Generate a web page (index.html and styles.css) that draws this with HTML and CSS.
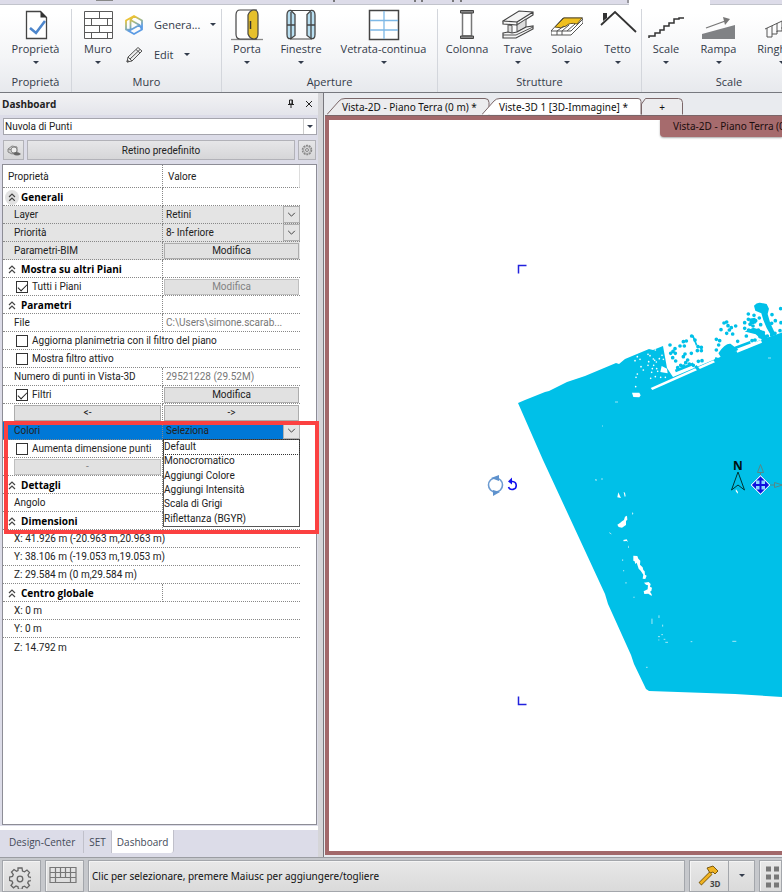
FILE: index.html
```
<!DOCTYPE html>
<html lang="it">
<head>
<meta charset="utf-8">
<title>Vista-3D</title>
<link rel="stylesheet" href="styles.css">
</head>
<body>
<svg width="0" height="0" class="defs" aria-hidden="true">
  <linearGradient id="hex" x1="0" y1="0" x2=".4" y2="1"><stop offset=".2" stop-color="#ecc233"/><stop offset=".5" stop-color="#9db68c"/><stop offset=".8" stop-color="#5b9be4"/></linearGradient>
  <symbol id="caret" viewBox="0 0 6 4"><path d="M0 0h6L3 3z" fill="#333c4c"/></symbol>
  <symbol id="chev" viewBox="0 0 10 6"><path d="M1 1l4 4 4-4" fill="none" stroke="#444" stroke-width="1.200"/></symbol>
  <symbol id="fold" viewBox="0 0 8 9"><path d="M1 4l3-3 3 3M1 8l3-3 3 3" fill="none" stroke="#444" stroke-width="1.200"/></symbol>
</svg>
<div class="app">
  <div class="menu-strip">
    <svg width="100%" height="5" aria-hidden="true"><path d="M96 0h17" stroke="#888" stroke-width="2"/><path d="M334 0v2M415 0v2M422 0v2M453 0v2M461 0v2" stroke="#555" stroke-width="1.500"/><path d="M629 0h81v5h-81z" fill="#fff"/><path d="M628 0v3" stroke="#555"/></svg>
  </div>
  <header class="ribbon">
    <section class="group group-props">
      <div class="tools tools-props">
        <button class="tool"><svg viewBox="0 0 32 32"><path d="M6.500 2.500h14l6 6v21h-20z" fill="#fff" stroke="#444" stroke-width="1.300"/><path d="M20.500 2v6.500h6.500z" fill="#333"/><path d="M10 19l6 5 9-12" fill="none" stroke="#4d86cc" stroke-width="2.600"/></svg>Proprietà<svg class="caret"><use href="#caret"/></svg></button>
      </div>
      <h2>Proprietà</h2>
    </section>
    <section class="group group-wall">
      <div class="tools tools-wall">
        <button class="tool"><svg viewBox="0 0 32 32"><path d="M2.500 2.500h28v27h-28zM2.500 9.500h28M2.500 16.500h28M2.500 23.500h28M17.500 2.500v7M9.500 9.500v7M25.500 9.500v7M17.500 16.500v7M9.500 23.500v6M25.500 23.500v6" fill="#fff" stroke="#5a5a5a"/></svg>Muro<svg class="caret"><use href="#caret"/></svg></button>
        <div class="stack">
          <button class="line"><svg viewBox="0 0 20 22"><path d="M10 2l8 4.500v9L10 20l-8-4.500v-9zM6.500 6v10l9-5zM6.500 6L10 2M15.500 11l2.500 4.500M6.500 16L2 15.500" fill="none" stroke="url(#hex)" stroke-width="1.800" stroke-linejoin="round"/></svg><span>Genera...</span><svg class="caret"><use href="#caret"/></svg></button>
          <button class="line edit"><svg viewBox="0 0 20 22"><path d="M3 18l1-5L14 3.500l4 3.500L8 17zM4 13l4 4M6 15l10-9.500M12 5.500l4 3.500M3 18l2-.5-1.500-1.500z" fill="#eee" stroke="#555"/></svg><span>Edit</span><svg class="caret"><use href="#caret"/></svg></button>
        </div>
      </div>
      <h2>Muro</h2>
    </section>
    <section class="group group-openings">
      <div class="tools tools-openings">
        <button class="tool"><svg viewBox="0 0 32 32"><path d="M0 30.500h32" stroke="#888" stroke-width="1.300"/><path d="M26 1H9Q5 1 5 6v19q0 5 4 5h17" fill="#fff" stroke="#444" stroke-width="1.200"/><path d="M17 6q2-5 6-5 4 0 4 5v19q0 5-4 5-4 0-6-5z" fill="#e6c02c" stroke="#444" stroke-width="1.200"/><path d="M19.500 12v8" stroke="#333" stroke-width="1.500"/></svg>Porta<svg class="caret"><use href="#caret"/></svg></button>
        <button class="tool"><svg viewBox="0 0 32 32"><path d="M5 1.500h22M5 30h22" stroke="#444"/><path d="M2 6q0-5 4-4.500l4 4v21l-4 3q-4 1-4-4zM30 6q0-5-4-4.500l-4 4v21l4 3q4 1 4-4z" fill="#b9dff1" stroke="#444" stroke-width="1.300"/><path d="M6 3v27M26 3v27M2 16h8M22 16h8" stroke="#444" stroke-width="1.300"/></svg>Finestre<svg class="caret"><use href="#caret"/></svg></button>
        <button class="tool"><svg viewBox="0 0 32 32"><path d="M1.500 1.500h29v29h-29z" fill="#fff" stroke="#444" stroke-width="1.500"/><path d="M16 2v28M2 11.500h28M2 21h28" stroke="#7db8e6" stroke-width="1.300"/></svg>Vetrata-continua<svg class="caret"><use href="#caret"/></svg></button>
      </div>
      <h2>Aperture</h2>
    </section>
    <section class="group group-struct">
      <div class="tools tools-struct">
        <button class="tool"><svg viewBox="0 0 32 32"><path d="M11.500 4h9v23h-9z" fill="#fff" stroke="#777" stroke-width="1.500"/><path d="M9.500 1.500h13v2.500h-13zM9.500 27h13v2.500h-13z" fill="#888" stroke="#444"/></svg>Colonna</button>
        <button class="tool"><svg viewBox="0 0 32 32"><path d="M1 12L17 2l14 1v3L15 16v-3zM1 12v3l14 1M15 13L31 3" fill="#f4f4f4" stroke="#444" stroke-width="1.200"/><path d="M6 16v8l4 1v-8.500zM15 16v7l9-5V10z" fill="#ddd" stroke="#555"/><path d="M1 24l5-1 4 1 5-1 9-5 7-1v3L14 29H1z" fill="#f4f4f4" stroke="#444" stroke-width="1.200"/><path d="M1 26h13l17-8" fill="none" stroke="#555"/></svg>Trave<svg class="caret"><use href="#caret"/></svg></button>
        <button class="tool"><svg viewBox="0 0 32 32"><path d="M0 22L12 9h20v5L20 26H0z" fill="#fff" stroke="#555"/><path d="M4 18l9-9h18l-5 6q-7-2-11 2-5 3-11 1z" fill="#f0c020" stroke="#665520"/><path d="M0 22h20l12-12M6 22l7-5M11 26v-4l7-6M16 22l8-7M6 26v-4" fill="none" stroke="#555"/></svg>Solaio<svg class="caret"><use href="#caret"/></svg></button>
        <button class="tool wide"><svg viewBox="0 0 38 32"><path d="M2 16L16 3l21 20" fill="none" stroke="#333" stroke-width="1.800"/><path d="M4 4h4v5l-4 3z" fill="#333"/></svg>Tetto<svg class="caret"><use href="#caret"/></svg></button>
      </div>
      <h2>Strutture</h2>
    </section>
    <section class="group group-stairs">
      <div class="tools tools-stairs">
        <button class="tool wide"><svg viewBox="0 0 38 32"><path d="M2 29v-2h6v-3h5v-3h4v-4h5v-3h5v-4h5v-1h5" fill="none" stroke="#333" stroke-width="1.500"/></svg>Scale<svg class="caret"><use href="#caret"/></svg></button>
        <button class="tool wide"><svg viewBox="0 0 38 32"><path d="M2 25L35 16v14H2z" fill="#808285"/><path d="M6 19l22-8" stroke="#777" stroke-width="1.300"/><path d="M23 8l7 2-5 6z" fill="#777"/></svg>Rampa<svg class="caret"><use href="#caret"/></svg></button>
        <button class="tool wide"><svg viewBox="0 0 38 32"><path d="M2 20L34 5M4 19v9h5v-3h5v-3h5v-4h6v-4h6v-4M9 17v8M14 14v9M19 12v8M25 9v8" fill="none" stroke="#555"/></svg>Ringhiera<svg class="caret"><use href="#caret"/></svg></button>
      </div>
      <h2>Scale</h2>
    </section>
  </header>

  <div class="main">
    <aside class="dock">
      <div class="dock-title"><h1>Dashboard</h1>
        <button aria-label="Blocca"><svg width="8" height="10" viewBox="0 0 8 10"><path d="M2.500 1h3v4h-3zM5 1v4M1 5.500h6M4 5.500V9" fill="none" stroke="#222"/></svg></button>
        <button aria-label="Chiudi"><svg width="8" height="8" viewBox="0 0 8 8"><path d="M1 1l6 6M7 1L1 7" stroke="#222"/></svg></button>
      </div>
      <label class="combo"><select aria-label="Tipo"><option>Nuvola di Punti</option></select><span class="combo-arrow"><svg class="caret"><use href="#caret"/></svg></span></label>
      <div class="preset">
        <button class="preset-icon" aria-label="Visualizza"><svg width="14" height="12" viewBox="0 0 14 12"><path d="M1 5l4-3 5 1v5l-5 2-4-2zM1 5l5 1 4-3M6 6v4" fill="#ccc" stroke="#888"/><circle cx="7" cy="6" r="3" fill="#eee" stroke="#888"/><path d="M6 10q3-4 8 0-4 3-8 0z" fill="#666"/></svg></button>
        <button class="preset-name">Retino predefinito</button>
        <button class="preset-icon small" aria-label="Opzioni"><svg width="12" height="12" viewBox="0 0 12 12"><circle cx="6" cy="6" r="4.500" fill="none" stroke="#888" stroke-width="1.500" stroke-dasharray="2 .8"/><circle cx="6" cy="6" r="3.500" fill="none" stroke="#999" stroke-width=".8"/><circle cx="6" cy="6" r="1.500" fill="none" stroke="#888"/></svg></button>
      </div>
      <div class="sheet">
        <table>
          <colgroup><col class="c1"><col></colgroup>
          <thead><tr><th>Proprietà</th><th>Valore</th></tr></thead>
          <tbody>
            <tr class="sec"><th><svg class="fold first"><use href="#fold"/></svg>Generali</th><td></td></tr>
            <tr class="gray"><td><label for="layer">Layer</label></td><td><div class="pick"><select id="layer"><option>Retini</option></select><svg class="chev"><use href="#chev"/></svg></div></td></tr>
            <tr class="gray"><td><label for="prio">Priorità</label></td><td><div class="pick"><select id="prio"><option>8- Inferiore</option></select><svg class="chev"><use href="#chev"/></svg></div></td></tr>
            <tr class="gray"><td>Parametri-BIM</td><td><button class="cell-btn">Modifica</button></td></tr>
            <tr class="sec"><th><svg class="fold"><use href="#fold"/></svg>Mostra su altri Piani</th><td></td></tr>
            <tr><td><label class="check"><input type="checkbox" checked>Tutti i Piani</label></td><td><button class="cell-btn" disabled>Modifica</button></td></tr>
            <tr class="sec"><th><svg class="fold"><use href="#fold"/></svg>Parametri</th><td></td></tr>
            <tr><td>File</td><td class="dim">C:\Users\simone.scarab...</td></tr>
            <tr><td colspan="2"><label class="check"><input type="checkbox">Aggiorna planimetria con il filtro del piano</label></td></tr>
            <tr><td colspan="2"><label class="check"><input type="checkbox">Mostra filtro attivo</label></td></tr>
            <tr><td>Numero di punti in Vista-3D</td><td class="dim">29521228 (29.52M)</td></tr>
            <tr><td><label class="check"><input type="checkbox" checked>Filtri</label></td><td><button class="cell-btn">Modifica</button></td></tr>
            <tr><td><button class="cell-btn">&lt;-</button></td><td><button class="cell-btn">-&gt;</button></td></tr>
            <tr class="hot"><td><label for="colors">Colori</label></td><td><div class="pick"><select id="colors"><option>Seleziona</option></select><svg class="chev"><use href="#chev"/></svg>
              <ul class="options" role="listbox" aria-label="Colori"><li role="option" aria-selected="true">Default</li><li role="option">Monocromatico</li><li role="option">Aggiungi Colore</li><li role="option">Aggiungi Intensità</li><li role="option">Scala di Grigi</li><li role="option">Riflettanza (BGYR)</li></ul></div></td></tr>
            <tr><td><label class="check"><input type="checkbox">Aumenta dimensione punti</label></td><td></td></tr>
            <tr><td><button class="cell-btn" disabled>-</button></td><td></td></tr>
            <tr class="sec"><th><svg class="fold"><use href="#fold"/></svg>Dettagli</th><td></td></tr>
            <tr><td>Angolo</td><td></td></tr>
            <tr class="sec"><th><svg class="fold"><use href="#fold"/></svg>Dimensioni</th><td></td></tr>
            <tr><td colspan="2">X: 41.926 m (-20.963 m,20.963 m)</td></tr>
            <tr><td colspan="2">Y: 38.106 m (-19.053 m,19.053 m)</td></tr>
            <tr><td colspan="2">Z: 29.584 m (0 m,29.584 m)</td></tr>
            <tr class="sec"><th><svg class="fold"><use href="#fold"/></svg>Centro globale</th><td></td></tr>
            <tr><td colspan="2">X: 0 m</td></tr>
            <tr><td colspan="2">Y: 0 m</td></tr>
            <tr class="last"><td colspan="2">Z: 14.792 m</td></tr>
          </tbody>
        </table>
        <div class="highlight"></div>
      </div>
      <nav class="dock-tabs"><button>Design-Center</button><button>SET</button><button class="active">Dashboard</button></nav>
    </aside>

    <section class="views">
      <nav class="view-tabs">
        <button class="vt vt-2d"><svg viewBox="0 0 164 17" preserveAspectRatio="none"><path d="M0 16.500L12 3q2-2.500 6-2.500h140q4 0 4 4v12" fill="#ececee" stroke="#7a6668"/></svg><span>Vista-2D - Piano Terra (0 m) *</span></button>
        <button class="vt vt-3d"><svg viewBox="0 0 160 17" preserveAspectRatio="none"><path d="M0 16.500L12 3q2-2.500 6-2.500h138q3 0 3 3v13" fill="#fff" stroke="#7a6668"/></svg><span>Viste-3D 1 [3D-Immagine] *</span></button>
        <button class="vt vt-new"><svg viewBox="0 0 42 17" preserveAspectRatio="none"><path d="M.5 16.500V6l4-5.500h33q4 0 4 4v12" fill="#ececee" stroke="#7a6668"/></svg><span>+</span></button>
      </nav>
      <div class="viewport">
        <svg class="scene" role="img" aria-label="Nuvola di punti">
          <g transform="translate(-329 -120)">
            <path d="M518 403l7-3 20-8 4-1 18-9 18-6 31-13 3 1 6-5 24-10 4 1 10-4 4 22 6 9 59-25 16-4 10-7 40-14V698L782 697 735 694 649 691 646 689 634 664 631 655 608 604 605 594 568 514 543 460z" fill="#00c0e8"/>
            <path d="M518 274v-8h8M518 697v8h8" transform="translate(.5 -.5)" fill="none" stroke="#22d" stroke-width="1.500"/>
            <g transform="translate(620 290) scale(.3333)">
              <path d="M135 178l10-6 20 72-12 4-12-30zM125 228l16 8 2 14-22-4z" fill="#fff"/>
              <path d="M92 294l188-83 5 6-188 83z" fill="#fff"/>
              <path d="M348 180l75-30 3 8-74 30zM36 308l22 0 4 8-4 6-18-1z" fill="#fff"/>
              <path d="M226 228l12 14M285 205l20 8" stroke="#00c0e8" stroke-width="9"/>
              <path d="M402 47q8-10 18-9l20 4 7 14-4 16 8 28 17 36-14 2-14-24-10-24-6-20-18-8z" fill="#00c0e8"/>
              <path d="M166 243l54-22M300 190q16-25 30-25l18 14-40 24zM345 174l46-17" fill="#00c0e8" stroke="#00c0e8" stroke-width="8"/>
              <path d="M382 124l18-8 26 8 14 20-12 4-20-18zM390 88l14-2 2 12-14 4zM215 138l4 0 11 28" fill="#00c0e8" stroke="#00c0e8" stroke-width="5"/>
              <path d="M150 165h.1M165 176h.1M180 168h.1M190 155h.1M199 153h.1M193 168h.1M215 138h.1M225 150h.1M234 170h.1M244 172h.1M232 182h.1M244 182h.1M214 190h.1M159 184h.1M152 190h.1M166 190h.1M158 203h.1M167 213h.1M190 200h.1M203 210h.1M195 192h.1M208 222h.1M220 226h.1M235 214h.1M246 212h.1M173 233h.1M182 226h.1M191 228h.1M197 218h.1M289 148h.1M299 152h.1M296 165h.1M289 180h.1M303 119h.1M312 99h.1M320 96h.1M324 107h.1M334 113h.1M328 120h.1M320 130h.1M338 132h.1M347 108h.1M353 154h.1M374 98h.1M374 115h.1M379 138h.1M385 72h.1M402 76h.1M385 88h.1M407 92h.1M418 84h.1M422 104h.1M456 74h.1M482 56h.1M455 100h.1M466 92h.1M483 98h.1M390 103h.1M399 108h.1M386 120h.1M415 120h.1M430 128h.1M396 152h.1M405 150h.1M420 140h.1M442 138h.1M455 135h.1M465 130h.1M480 122h.1" stroke="#00c0e8" stroke-width="11" stroke-linecap="round"/>
              <path d="M60 208h.1M45 212h.1M52 200h.1M84 193h.1M90 197h.1M86 215h.1M100 207h.1M104 211h.1M109 216h.1M118 206h.1M101 226h.1M97 236h.1M110 236h.1M113 244h.1M95 247h.1M70 240h.1M48 262h.1M47 290h.1M52 252h.1M63 230h.1M92 265h.1M106 260h.1M106 180h.1M126 196h.1M84 226h.1M130 208h.1M122 262h.1M136 262h.1" stroke="#fff" stroke-width="5" stroke-linecap="round"/>
            </g>
            <g transform="translate(480 460) scale(.3333)" fill="#fff">
              <path d="M435 170l6-3 1 12-4 4 0 12-12 8-10-2-4-7 8-5 6-5 6-4zM460 287l12 1 3 8 6 6-1 12 8 8 2 8 4 4 1 10 5 3-4 10-8-1 2-12-8-12-6-6-6-18-4 4-2-8-4-2zM492 368l14-2 6 6-2 8 6 3-2 10-4 2 5 8 0 5-10-7-12 1-2-8 12-6 1-12-6-2zM412 112l3-15 4 9 4 8zM431 96l4 2 2 11-3 1zM430 240l10-2 4 8-4-3-9 1zM444 256l3 6-2 3zM456 157l4 3-2 5zM345 58l6 1-3 4zM768 88l6 8-1 5-6-8z"/>
              <path d="M516 476v16M537 466v8M548 494v6M534 530h6M544 524h5M551 538h5M535 540h3M556 547h8M632 545h5M757 544h12M498 622h5M431 330v4M428 298v5M388 218l6 4M438 366v5M462 410v4" stroke="#a6e8f6" stroke-width="3"/>
            </g>
            <path d="M602 426h1M601 479h2M768 358h3M615 402h3" stroke="#9be4f5"/>
            <circle cx="495.500" cy="485" r="7" fill="none" stroke="#6c9bd1" stroke-width="1.600"/>
            <path d="M491 478l8-3v6zM500 492l-7-2v6z" fill="#5e92cd"/>
            <path d="M510 481.500h2.500a4 4 0 1 1-4 5.500" fill="none" stroke="#11e" stroke-width="1.600"/><path d="M508 481.500l4-4v7z" fill="#11e"/>
            <path d="M738 472l-6.500 18 6.500-5 6.500 5z" fill="none" stroke="#033"/>
            <text x="733" y="470">N</text>
            <path d="M760.500 476v-3M757.500 472.500h6l-3-8zM769 485h6M774.500 482.500v5l8-2.500z" fill="none" stroke="#588"/>
            <path d="M760.500 475.500l9.500 9.500-9.500 9.500-9.500-9.500z" fill="#8fd8ff" stroke="#def"/>
            <path d="M754 485h13M760.500 478v14" stroke="#11d" stroke-width="2"/>
            <path d="M752 485l4-4v8zM769 485l-4-4v8zM760.500 476.500l-4 4h8zM760.500 493.500l-4-4h8z" fill="#11d"/>
          </g>
        </svg>
        <div class="banner">Vista-2D - Piano Terra (0 m)</div>
      </div>
    </section>
  </div>

  <footer class="status">
    <button class="st-btn" aria-label="Impostazioni"><svg width="22" height="22" viewBox="0 0 22 22"><path d="M9 1h4l.5 3 2 .8 2.500-1.800 2.500 2.500-1.500 2.500.8 2 2.700.5v3l-3 .5-.8 2 1.800 2.500-2.500 2.500-2.500-1.800-2 .8-.5 2.500h-3.500l-.5-2.700-2-.8-2.500 1.800L2 18.500 3.800 16 3 14l-2.500-.5v-3.500l3-.5.8-2L2.500 5 5 2.500l2.500 1.800 1.500-.8z" fill="none" stroke="#666" stroke-width="1.300"/><circle cx="11" cy="12" r="2.800" fill="none" stroke="#666" stroke-width="1.300"/></svg></button>
    <button class="st-btn keys" aria-label="Tastiera"><svg width="28" height="18" viewBox="0 0 28 18"><path d="M1 1.500h26v15H1zM1 6.500h26M1 11.500h26M6.500 1.500v15M11.500 1.500v10M16.500 1.500v10M21.500 1.500v15" fill="none" stroke="#777" stroke-width="1.200"/></svg></button>
    <output class="st-text">Clic per selezionare, premere Maiusc per aggiungere/togliere</output>
    <div class="st-split"><button aria-label="Martello"><svg width="24" height="24" viewBox="0 0 24 24"><path d="M3 20L14 9" stroke="#7a5a10" stroke-width="4"/><path d="M3.500 19.500L14 9" stroke="#f0b323" stroke-width="2.600"/><path d="M10 4l6-2 5 5-3 3-2-2-3 1z" fill="#f0b323" stroke="#7a5a10"/><text x="13" y="23">3D</text></svg></button><button aria-label="Altro"><svg class="caret"><use href="#caret"/></svg></button></div>
    <button class="st-btn st-grid" aria-label="Griglia"><svg width="24" height="24" viewBox="0 0 24 24"><path d="M3 4h18M3 12h18M3 20h18" stroke="#777" stroke-width="5" stroke-dasharray="5 3"/></svg></button>
  </footer>
</div>
</body>
</html>
```
FILE: styles.css
```
* { box-sizing: border-box; }
body { margin: 0; background: #dcdce8; color: #222; font: 10px "Roboto", sans-serif; overflow: hidden; }
button { font: inherit; color: inherit; padding: 0; margin: 0; border: 0; background: none; }
h1, h2, ul { margin: 0; padding: 0; }
.defs { position: absolute; }
.caret { width: 6px; height: 4px; flex: none; }
.app { display: flex; flex-direction: column; height: 100vh; overflow: hidden; }

/* Ribbon */
.menu-strip { height: 5px; flex: none; background: #dddce9; border-bottom: 1px solid #c2c4cc; }
.menu-strip svg { display: block; }
.ribbon { display: flex; flex: none; height: 88px; padding-top: 4px; background: linear-gradient(#fff 10%, #f4f5f7 60%, #e7e9ed); border-bottom: 1px solid #77797f; font: 11px/16px "Open Sans", sans-serif; color: #333a48; overflow: hidden; }
.group { display: flex; flex-direction: column; flex: none; justify-content: space-between; border-right: 1px solid #d3d6dc; }
.group h2 { font: inherit; text-align: center; padding-bottom: 2px; }
.tools { display: grid; }
.tools-props { grid-template-columns: 71px; }
.tools-wall { grid-template-columns: 52px 97px; }
.tools-openings { grid-template-columns: 50px 58px 107px; }
.tools-struct { grid-template-columns: 58px 44px 54px 47px; }
.tools-stairs { grid-template-columns: 48px 57px 69px; }
.tool { display: flex; flex-direction: column; align-items: center; white-space: nowrap; }
.tool > svg:first-child { width: 32px; height: 32px; }
.tool.wide > svg:first-child { width: 38px; }
.tool .caret { margin-top: 4px; }
.stack { display: flex; flex-direction: column; gap: 8px; padding-top: 5px; }
.line { display: flex; align-items: center; height: 22px; }
.line svg:first-child { width: 20px; height: 22px; margin-right: 10px; }
.line .caret { margin-left: 10px; }

/* Docked panel */
.main { display: grid; grid-template-columns: 318px 1fr; flex: 1; min-height: 0; border-bottom: 1px solid #9b9da2; }
.dock { display: flex; flex-direction: column; min-height: 0; background: #dcdce8; }
.dock-title { display: flex; align-items: center; gap: 10px; height: 22px; padding: 0 5px 0 2px; background: linear-gradient(#f2f2f4, #e4e5eb); }
.dock-title h1 { flex: 1; font: 700 10px "Open Sans", sans-serif; }
.dock-title svg { display: block; }
.combo { display: flex; height: 17px; margin: 3px 1px 0 3px; background: #fff; border: 1px solid #a5a5ad; }
.combo select { flex: 1; min-width: 0; }
select { appearance: none; border: 0; background: transparent; font: inherit; color: inherit; padding: 0 1px; margin: 0; outline: 0; }
.combo-arrow { display: grid; place-items: center; width: 13px; border-left: 1px solid #ccc; }
.preset { display: flex; gap: 3px; height: 20px; margin: 5px 2px 0 3px; }
.preset button { display: grid; place-items: center; border: 1px solid #b2b2b8; background: linear-gradient(#e6e6e8, #d6d6d8); }
.preset-icon { width: 21px; }
.preset .small { width: 18px; }
.preset .preset-name { flex: 1; }
.sheet { position: relative; flex: 1; min-height: 0; margin: 4px 1px 0 2px; background: #fff; border: 1px solid #8d8d96; }
table { width: 297px; table-layout: fixed; border-collapse: separate; border-spacing: 0; }
.c1 { width: 160px; }
th, td { height: 18px; padding: 0 0 0 11px; text-align: left; font-weight: 400; line-height: 16px; white-space: nowrap; border-bottom: 1px dotted #888; vertical-align: middle; }
thead th { height: 23px; padding: 1px 0 0 5px; }
tr > :first-child:not([colspan]) { border-right: 1px dotted #888; }
thead th:last-child { border-right: 1px solid #ddd; }
tbody td:first-child { padding-top: 1px; }
td + td { padding-left: 3px; }
.sec th { padding-left: 5px; font: 700 10px/16px "Open Sans", sans-serif; color: #000; }
.gray td { background: #e4e4e4; }
.hot td { background: #0078d7; }
.last td { border-bottom: 0; }
.dim { color: #777; }
.fold { width: 8px; height: 9px; margin-right: 5px; vertical-align: -1px; }
.fold.first { border-radius: 50%; box-shadow: 0 0 0 3px #e2e2e2; background: #e2e2e2; }
.pick { position: relative; display: flex; height: 17px; }
.pick select { width: 100%; padding: 0; }
.chev { position: absolute; right: 0; top: 0; width: 17px; height: 17px; padding: 5px 3px; background: #e4e4e4; border: 1px solid #b0b0b0; pointer-events: none; }
.cell-btn { display: block; width: 100%; height: 16px; line-height: 14px; background: #e1e1e1; border: 1px solid #adadad; }
tbody td:has(> .cell-btn) { padding-right: 1px; padding-top: 0; }
td + td:has(> .cell-btn) { padding-left: 1px; }
.cell-btn:disabled { color: #838383; border-color: #bfbfbf; }
.check { display: flex; align-items: center; gap: 4px; padding-left: 2px; }
.check input { appearance: none; position: relative; width: 12px; height: 12px; margin: 0; border: 1px solid #333; background: #fff; }
.check input:checked::after { content: ""; position: absolute; left: 1px; top: 2px; width: 8px; height: 4px; border: solid #222; border-width: 0 0 1px 1px; transform: rotate(-45deg); }
.options { position: absolute; z-index: 2; top: 17px; left: -3px; right: 0; height: 88px; display: grid; grid-template-rows: repeat(6, 1fr); align-items: center; list-style: none; background: #fff; border: 1px solid #555; line-height: 14px; }
.options li[aria-selected] { outline: 1px dotted #333; }
.highlight { position: absolute; z-index: 3; left: 1px; right: -3px; top: 256px; height: 113px; border: 4px solid #fb4141; pointer-events: none; }
.dock-tabs { display: flex; height: 31px; margin-top: 1px; padding-bottom: 4px; border-top: 4px solid #fff; font: 10px "Open Sans", sans-serif; color: #444a58; }
.dock-tabs button { padding: 0 5px; margin-top: 1px; border-right: 1px solid #c0c0ca; }
.dock-tabs button:first-child { padding: 0 8px 0 9px; }
.dock-tabs .active { background: #fff; margin-top: 0; border-radius: 0 0 3px 0; }

/* Views */
.views { display: flex; flex-direction: column; min-width: 0; padding: 0 0 2px 7px; background: linear-gradient(90deg, #d5d5d8 5px, #77777d 5px, #77777d 6px, #e9ebef 6px); }
.view-tabs { display: flex; align-items: flex-end; height: 23px; font: 10px "Noto Sans", sans-serif; color: #111; padding-left: 2px; border-bottom: 1px solid #7a6668; }
.vt { position: relative; height: 17px; text-align: left; white-space: nowrap; flex: none; }
.vt svg { position: absolute; inset: 0; width: 100%; height: 100%; }
.vt span { position: relative; }
.vt-2d { width: 164px; padding-left: 15px; }
.vt-3d { width: 160px; margin-left: -9px; padding-left: 17px; z-index: 1; }
.vt-new { width: 42px; margin-left: -1px; text-align: center; }
.viewport { position: relative; flex: 1; min-height: 0; background: #fff; border: 4px solid #a2686a; border-right: 0; overflow: hidden; }
.scene { position: absolute; inset: 0; width: 100%; height: 100%; }
.scene text { font: 700 12px "Open Sans", sans-serif; fill: #011; }
.banner { position: absolute; right: 0; top: -1px; width: 122px; height: 18px; padding: 0 0 0 13px; border-bottom-left-radius: 4px; background: #a66b6d; color: #1b0d0d; font: 10px/15px "Noto Sans", sans-serif; white-space: nowrap; box-shadow: 0 1px 2px #aaa; }

/* Status bar */
.status { display: flex; gap: 4px; height: 34px; flex: none; padding: 2px 0 0 2px; background: #c6c8cc; font: 10px "Noto Sans", sans-serif; color: #111; }
.status > * { border: 1px solid #a3a6ab; background: linear-gradient(#e8e8e8, #dadada); box-shadow: inset 1px 1px #f4f4f4; }
.st-btn { display: grid; place-items: center; width: 39px; flex: none; padding: 4px 4px 0 0; }
.st-btn.keys { padding: 0 3px 2px 0; }
.st-text { flex: 1; min-width: 0; padding-left: 3px; line-height: 30px; white-space: nowrap; overflow: hidden; }
.st-split { display: grid; grid-template-columns: 38px 1fr; width: 66px; flex: none; }
.st-split button { display: grid; place-items: center; }
.st-split button + button { border-left: 1px solid #a3a6ab; }
.st-split text { font: 700 8px "Open Sans", sans-serif; fill: #444; }
.st-btn.st-grid { width: 23px; padding: 2px 0 0 3px; place-items: center start; overflow: hidden; }
```
